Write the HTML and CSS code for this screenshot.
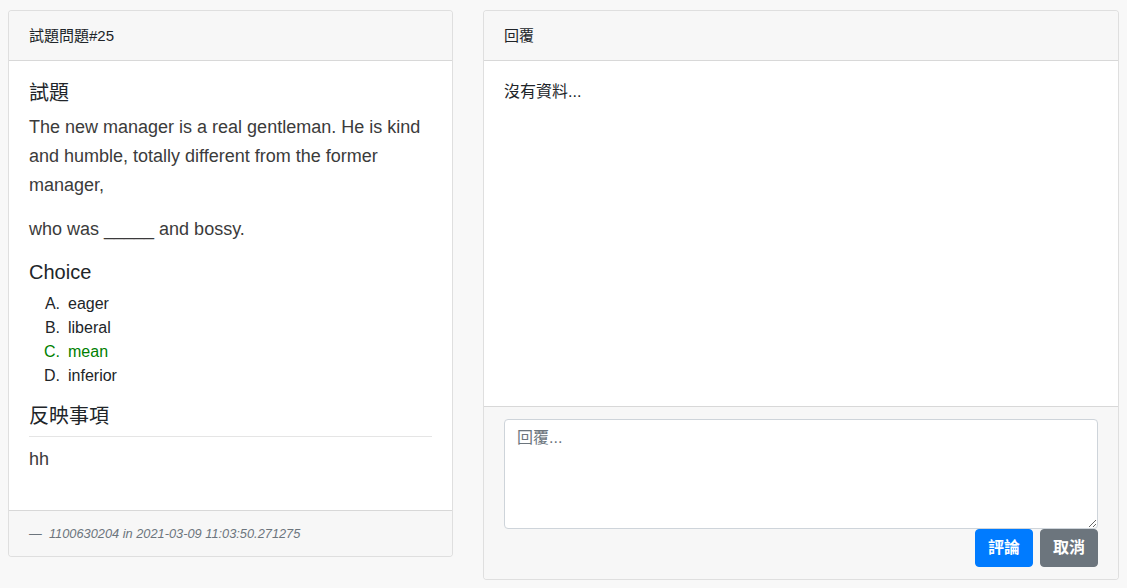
FILE: index.html
```html
<!DOCTYPE html>
<html lang="zh-Hant">
<head>
<meta charset="utf-8">
<title>試題問題#25</title>
<link rel="stylesheet" href="styles.css">
</head>
<body>
<div class="row">
  <div class="card card-left">
    <div class="card-header">試題問題#25</div>
    <div class="card-body">
      <h5 class="title">試題</h5>
      <p class="lead">The new manager is a real gentleman. He is kind and humble, totally different from the former manager,</p>
      <p class="lead">who was _____ and bossy.</p>
      <h5 class="title">Choice</h5>
      <ol class="choices">
        <li>eager</li>
        <li>liberal</li>
        <li class="correct">mean</li>
        <li>inferior</li>
      </ol>
      <h5 class="title">反映事項</h5>
      <hr class="divider">
      <p class="lead">hh</p>
    </div>
    <div class="card-footer">
      <span class="quote-footer"><em>1100630204 in 2021-03-09 11:03:50.271275</em></span>
    </div>
  </div>
  <div class="card card-right">
    <div class="card-header">回覆</div>
    <div class="card-body reply-body">
      <p class="empty">沒有資料...</p>
    </div>
    <div class="card-footer reply-footer">
      <textarea class="form-control" rows="4" placeholder="回覆..."></textarea>
      <div class="actions">
        <button class="btn btn-primary" type="button">評論</button>
        <button class="btn btn-secondary" type="button">取消</button>
      </div>
    </div>
  </div>
</div>
</body>
</html>
```
FILE: styles.css
```css
*, *::before, *::after { box-sizing: border-box; }
html, body {
  margin: 0;
  padding: 0;
  background: #f8f8f8;
}
body {
  font-family: "Liberation Sans", Arial, "Noto Sans CJK TC", sans-serif;
  font-size: 16px;
  line-height: 1.5;
  color: #212529;
}
.row {
  display: flex;
  align-items: flex-start;
  gap: 30px;
  padding: 10px 0 0 8px;
}
.card {
  background: #fff;
  border: 1px solid rgba(0,0,0,.125);
  border-radius: 4px;
  display: flex;
  flex-direction: column;
}
.card-left { width: 445px; }
.card-right { width: 636px; }
.card-header {
  padding: 12px 20px;
  background: #f7f7f7;
  border-bottom: 1px solid rgba(0,0,0,.125);
  border-radius: 3px 3px 0 0;
  font-size: 15px;
  line-height: 25px;
}
.card-body {
  padding: 20px;
}
.card-footer {
  padding: 12px 20px;
  background: #f7f7f7;
  border-top: 1px solid rgba(0,0,0,.125);
  border-radius: 0 0 3px 3px;
}
.title {
  margin: 0 0 8px;
  font-size: 20px;
  font-weight: 400;
  line-height: 1.2;
  color: #212529;
}
.lead {
  margin: 0 0 16px;
  font-size: 18px;
  line-height: 1.6;
  color: #3b3b3b;
}
.choices {
  list-style: none;
  counter-reset: choice;
  margin: 0 0 16px;
  padding-left: 39px;
  font-size: 16px;
  line-height: 24px;
}
.choices li { counter-increment: choice; }
.choices li::before {
  content: counter(choice, upper-alpha) ".";
  display: inline-block;
  width: 24px;
  margin-left: -24px;
  padding-right: 8px;
  text-align: right;
}
.choices .correct { color: #008000; }
.divider {
  border: 0;
  border-top: 1px solid rgba(0,0,0,.1);
  margin: 0 0 8px;
}
.card-left .card-footer { line-height: 20px; }
.quote-footer {
  font-size: 12.8px;
  line-height: 20px;
  color: #6c757d;
}
.quote-footer::before {
  content: "\2014\00A0\00A0";
}
.reply-body {
  height: 345px;
}
.empty {
  margin: 0;
  font-size: 16px;
  line-height: 20px;
  padding-top: 1px;
}
.reply-footer {
  display: flex;
  flex-direction: column;
}
.form-control {
  display: block;
  width: 100%;
  height: 110px;
  padding: 6px 12px;
  font-family: "Liberation Sans", Arial, "Noto Sans CJK TC", sans-serif;
  font-size: 16px;
  line-height: 1.5;
  color: #495057;
  background: #fff;
  border: 1px solid #ced4da;
  border-radius: 4px;
  resize: vertical;
  margin: 0;
}
.form-control::placeholder { color: #6c757d; }
.actions {
  display: flex;
  justify-content: flex-end;
  gap: 7px;
}
.btn {
  font-family: "Liberation Sans", Arial, "Noto Sans CJK TC", sans-serif;
  font-size: 16px;
  font-weight: 700;
  line-height: 24px;
  padding: 6px 12px;
  border: 1px solid transparent;
  border-radius: 4px;
  color: #fff;
  cursor: pointer;
}
.btn-primary { background: #007bff; border-color: #007bff; }
.btn-secondary { background: #6c757d; border-color: #6c757d; }
```
